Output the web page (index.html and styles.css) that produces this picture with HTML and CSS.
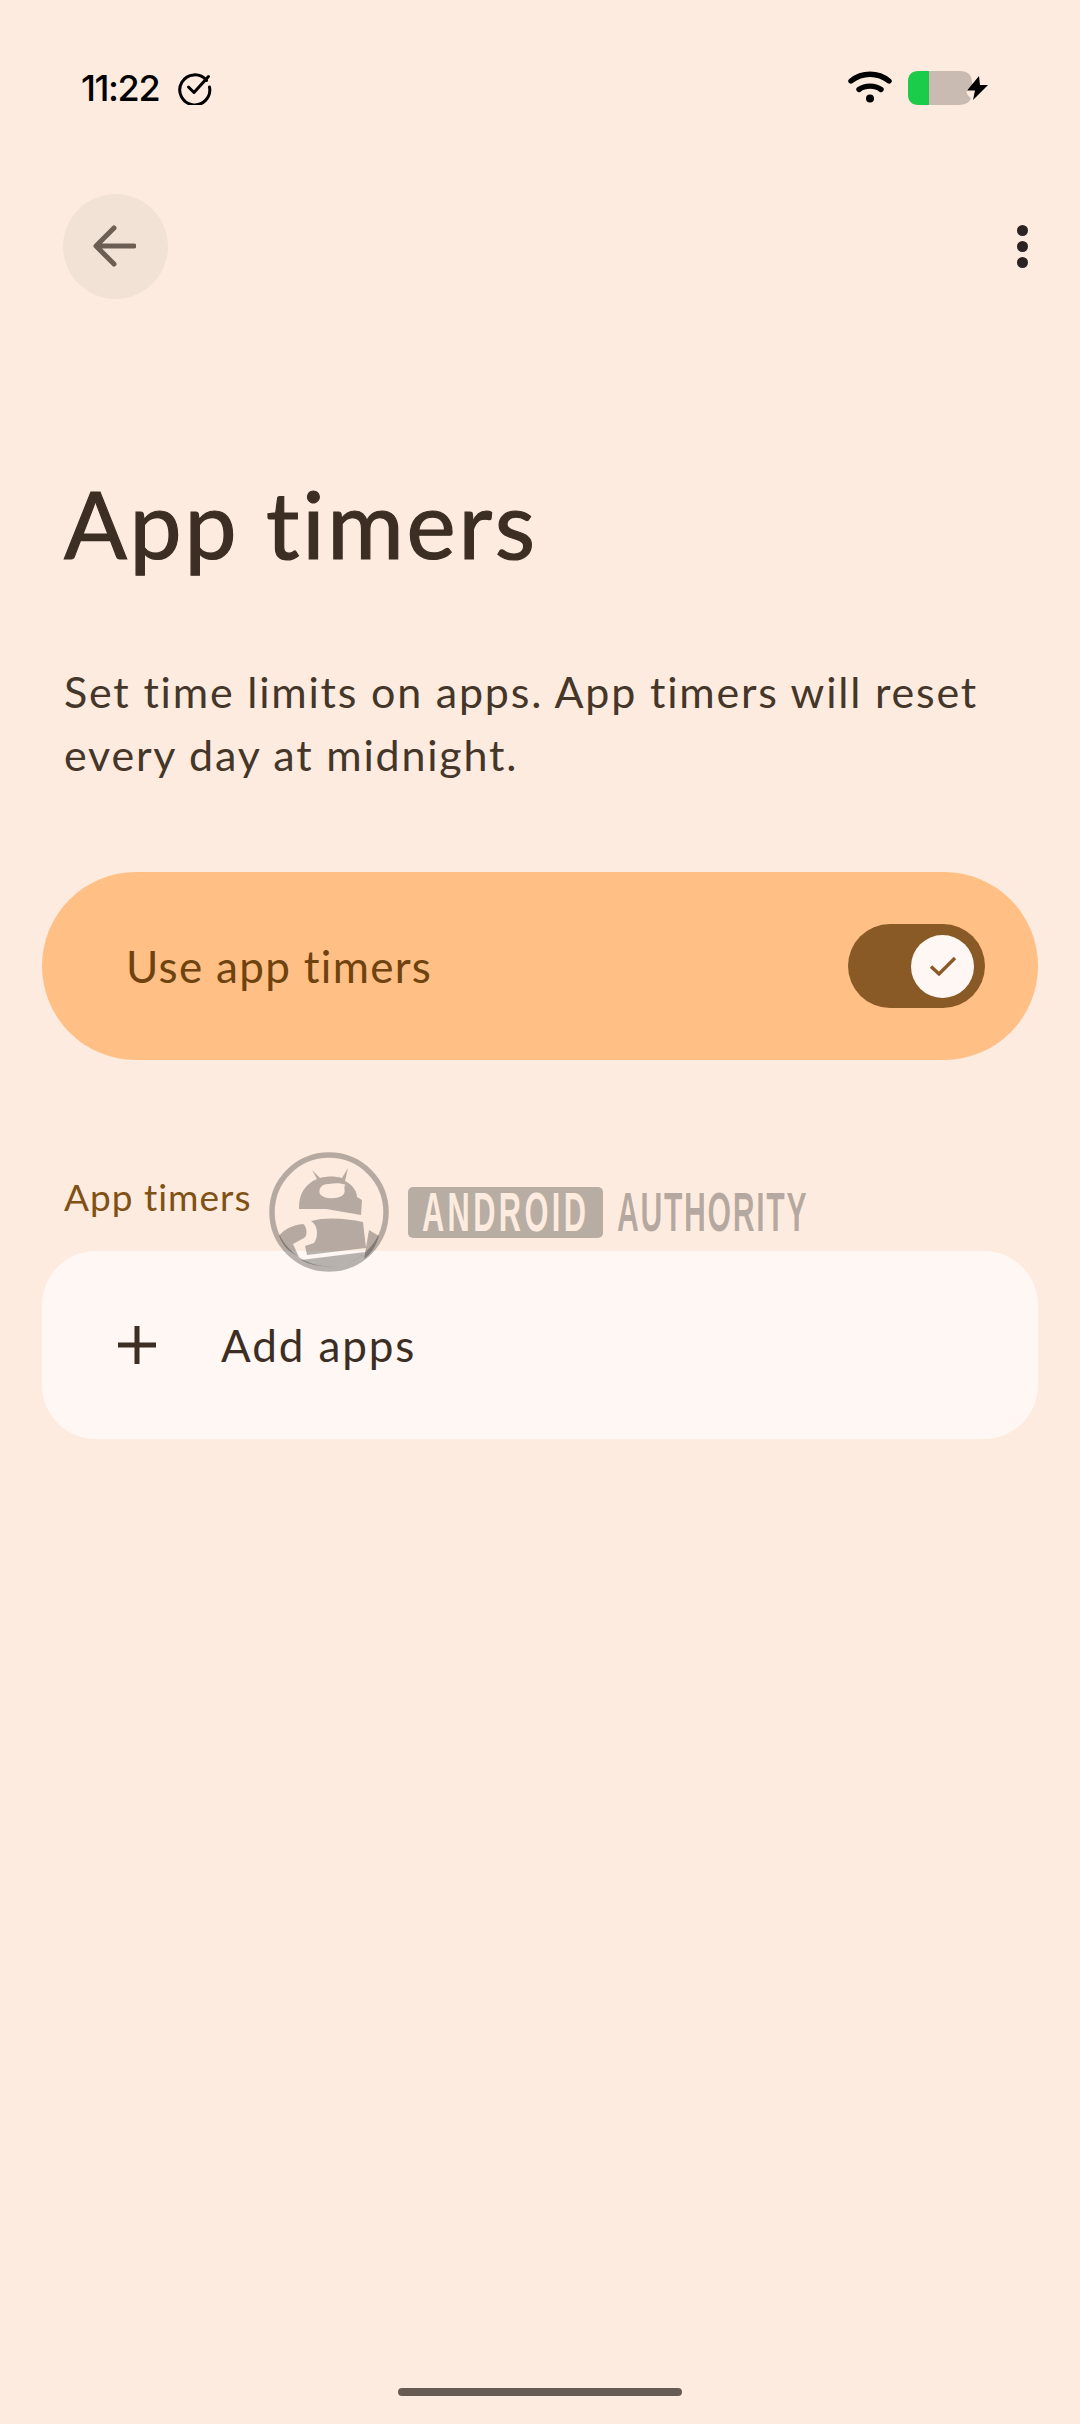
FILE: index.html
```html
<!DOCTYPE html>
<html lang="en">
<head>
<meta charset="utf-8">
<title>App timers</title>
<link rel="stylesheet" href="styles.css">
</head>
<body>
<div class="screen">
  <header class="status">
    <div class="status-left">
      <span class="clock">11:22</span>
      <svg class="ic-check" viewBox="0 0 36 36" width="36" height="36"><path d="M29.5 11.5A15 15 0 1 0 32.5 18" fill="none" stroke="#000" stroke-width="3" stroke-linecap="round"/><path d="M11.5 18l5.5 5.5L31.5 7.5" fill="none" stroke="#000" stroke-width="3" stroke-linecap="round" stroke-linejoin="round"/></svg>
    </div>
    <div class="status-right">
      <svg class="ic-wifi" viewBox="0 0 44 32" width="44" height="32"><path d="M3 10C14 1 30 1 41 10" fill="none" stroke="#000" stroke-width="5.4" stroke-linecap="round"/><path d="M11 18.500C17 14 27 14 33 18.500" fill="none" stroke="#000" stroke-width="5.400" stroke-linecap="round"/><circle cx="22" cy="27.500" r="4"/></svg>
      <svg class="ic-batt" viewBox="0 0 81 36" width="81" height="36"><path d="M12 1H53Q65 1 65 13V16Q58 19 60 24Q62 27 64 28Q62 35 52 35H12Q1 35 1 24V12Q1 1 12 1Z" fill="#C9BBB1"/><path d="M12 1H22V35H12Q1 35 1 24V12Q1 1 12 1Z" fill="#1BCC4B"/><path d="M72 6L60 20.500H68L66 30L81 15H73Z" fill="#000"/></svg>
    </div>
  </header>

  <nav class="toolbar">
    <button class="back" type="button" aria-label="Back">
      <svg viewBox="0 0 44 42" width="44" height="42"><path d="M42 21H5M22 3L4 21L22 39" fill="none" stroke="#6C5E52" stroke-width="5" stroke-linecap="round" stroke-linejoin="round"/></svg>
    </button>
    <div class="more" aria-label="More"><i></i><i></i><i></i></div>
  </nav>

  <main class="content">
    <h1 class="title">App timers</h1>
    <p class="desc">Set time limits on apps. App timers will reset every day at midnight.</p>

    <section class="main-switch">
      <span class="switch-label">Use app timers</span>
      <span class="toggle">
        <span class="thumb">
          <svg viewBox="0 0 30 24" width="30" height="24"><path d="M3 12.500L11 20L27 4" fill="none" stroke="#8A5A26" stroke-width="3.400"/></svg>
        </span>
      </span>
    </section>

    <h2 class="section-label">App timers</h2>
    <section class="card">
      <svg class="plus" viewBox="0 0 38 38" width="38" height="38"><path d="M19 0V38M0 19H38" stroke="#3D2E24" stroke-width="5"/></svg>
      <span class="card-label">Add apps</span>
    </section>
  </main>

  <div class="home-bar"></div>

  <div class="watermark">
    <svg class="wm-logo" viewBox="0 0 120 120" width="120" height="120">
      <circle cx="60" cy="60" r="57" fill="none" stroke="#000" stroke-opacity=".28" stroke-width="5.500"/>
      <path fill="#000" fill-opacity=".28" fill-rule="evenodd" d="M30 55C30 42 36 32 48 27L43 18L51 26C58 24 66 24 73 26L79 16L76 29C82 32 88 38 88 45L93 48L92 63L57 57H30ZM60 32C52 32 49 37 51 42C54 47 68 48 74 43C78 39 73 34 77 33C72 31 66 31 60 32Z"/>
      <path fill="#000" fill-opacity=".28" d="M42 69C56 65 76 66 94 70L97 96L38 103L36 94L45 91C49 86 50 74 42 69Z"/>
      <path fill="#000" fill-opacity=".28" d="M10 84C15 77 24 73 34 72C38 74 39 84 35 86L24 92L30 105C20 100 14 94 10 84Z"/>
      <path fill="#000" fill-opacity=".28" d="M100 78L110 84C106 96 102 102 95 107Z"/>
      <path fill="#000" fill-opacity=".28" d="M32 108L96 100C84 114 54 120 32 108Z"/>
    </svg>
    <span class="wm-badge"><span class="wm-badge-text">ANDROID</span></span>
    <span class="wm-text"><span class="wm-text-inner">AUTHORITY</span></span>
  </div>
</div>
</body>
</html>
```

FILE: styles.css
```css
* { box-sizing: border-box; }
html, body { margin: 0; padding: 0; }
body { background: #FDEBDF; font-family: "Lato", "Noto Sans", sans-serif; font-variant-ligatures: none; }
.screen { position: relative; width: 1080px; height: 2424px; display: flex; flex-direction: column; background: #FDEBDF; overflow: hidden; }

.status { height: 104px; padding: 70px 92px 0 81px; display: flex; justify-content: space-between; align-items: flex-start; }
.status-left { display: flex; align-items: center; gap: 18px; height: 36px; }
.clock { font-family: "Inter", sans-serif; font-size: 36px; font-weight: 500; line-height: 36px; letter-spacing: -1.4px; color: #000; }
.ic-check { margin-top: -2px; }
.status-right { display: flex; align-items: flex-start; gap: 15px; }
.ic-wifi { margin-top: 1px; }
.ic-batt { margin-top: 0; }

.toolbar { height: 194px; padding: 90px 52px 0 63px; display: flex; justify-content: space-between; align-items: flex-start; }
.back { width: 105px; height: 105px; padding: 0 4px 2px 0; border: 0; border-radius: 50%; background: #F2E2D5; display: flex; align-items: center; justify-content: center; }
.more { display: flex; flex-direction: column; gap: 5px; padding-top: 31px; }
.more i { display: block; width: 11px; height: 11px; border-radius: 50%; background: #2A2321; }

.content { padding: 0 42px; display: flex; flex-direction: column; }
.title { margin: 170px 0 0 22px; font-size: 93px; font-weight: 400; line-height: 110px; letter-spacing: 2.8px; color: #3D2E24; -webkit-text-stroke: 1.2px #3D2E24; }
.desc { margin: 82px 0 0 22px; width: 960px; font-size: 43px; line-height: 63px; letter-spacing: 1.8px; color: #443629; }

.main-switch { margin-top: 86px; height: 188px; border-radius: 94px; background: #FFBF85; display: flex; align-items: center; justify-content: space-between; padding: 0 53px 0 84px; }
.switch-label { font-size: 44px; line-height: 50px; letter-spacing: 1.3px; color: #6E430F; }
.toggle { width: 137px; height: 84px; border-radius: 42px; background: #8A5A26; display: flex; align-items: center; justify-content: flex-end; padding-right: 11px; }
.thumb { width: 63px; height: 63px; border-radius: 50%; background: #FFF7F3; display: flex; align-items: center; justify-content: center; }

.section-label { margin: 115px 0 0 22px; height: 44px; font-size: 37px; font-weight: 400; line-height: 44px; letter-spacing: 1px; color: #7F5114; }
.card { margin-top: 32px; height: 188px; border-radius: 54px; background: #FFF7F3; display: flex; align-items: center; padding-left: 76px; gap: 65px; }
.card-label { font-size: 44px; line-height: 50px; letter-spacing: 1.9px; color: #3D2E24; }

.home-bar { position: absolute; left: 398px; top: 2388px; width: 284px; height: 8px; border-radius: 4px; background: #665C55; }

.watermark { position: absolute; left: 269px; top: 1152px; display: flex; align-items: center; }
.wm-logo { display: block; }
.wm-badge { margin-left: 19px; width: 195px; height: 51px; border-radius: 5px; background: #B8ADA3; padding-left: 14px; }
.wm-badge-text { display: block; width: 300px; font-family: "Liberation Sans", sans-serif; font-size: 55px; font-weight: 700; line-height: 51px; letter-spacing: 6px; color: #FDEBDF; white-space: nowrap; transform: scaleX(.56); transform-origin: left center; }
.wm-text { margin-left: 14px; width: 192px; height: 51px; }
.wm-text-inner { display: block; width: 350px; font-family: "Liberation Sans", sans-serif; font-size: 55px; font-weight: 700; line-height: 51px; letter-spacing: 3px; color: rgba(0,0,0,.28); white-space: nowrap; transform: scaleX(.55); transform-origin: left center; }
```
